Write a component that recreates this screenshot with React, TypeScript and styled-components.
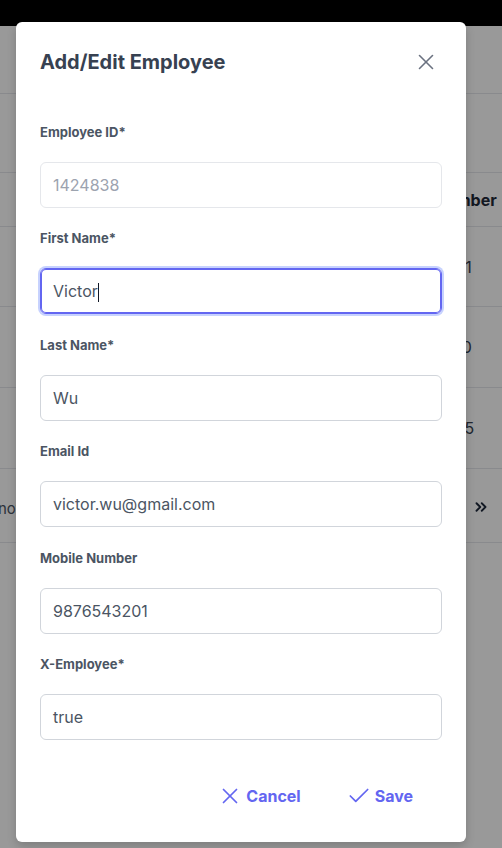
import React from "react";
import styled, { createGlobalStyle } from "styled-components";
import { X, Check, ChevronsRight } from "lucide-react";

const GlobalStyle = createGlobalStyle`
  html, body { margin: 0; padding: 0; }
  body {
    font-family: Inter, "Noto Sans", "Liberation Sans", sans-serif;
    background: #ffffff;
    overflow: hidden;
  }
  * { box-sizing: border-box; }
`;

/* ---------- background page ---------- */
const Page = styled.div`
  position: relative;
  width: 502px;
  height: 848px;
  overflow: hidden;
  background: #ffffff;
  color: #374151;
`;

const NavBar = styled.div`
  height: 26px;
  background: #000000;
`;

const Toolbar = styled.div<{ $h: number }>`
  height: ${(p) => p.$h}px;
  border-bottom: 1px solid #e5e7eb;
`;

const Row = styled.div<{ $h: number }>`
  display: grid;
  grid-template-columns: 377px 1fr;
  align-items: center;
  height: ${(p) => p.$h}px;
  border-bottom: 1px solid #e5e7eb;
  font-size: 16px;
  white-space: nowrap;
`;

const HeadCell = styled.div`
  font-weight: 700;
  color: #1f2937;
`;

const Cell = styled.div`
  color: #374151;
`;

const PagerRow = styled.div`
  display: flex;
  align-items: center;
  justify-content: space-between;
  height: 74px;
  padding-right: 12px;
  border-bottom: 1px solid #e5e7eb;
  font-size: 15px;
  color: #4b5563;
  white-space: nowrap;
`;

const PagerText = styled.span`
  display: inline-block;
  margin-top: 6px;
  text-indent: -2px;
`;

const PagerIcon = styled.span`
  display: inline-flex;
  color: #1e293b;
  margin-top: 2px;
`;

/* ---------- modal ---------- */
const Overlay = styled.div`
  position: absolute;
  inset: 0;
  background: rgba(0, 0, 0, 0.4);
  padding: 22px 0 0 16px;
`;

const Dialog = styled.div`
  width: 450px;
  background: #ffffff;
  border-radius: 6px;
  box-shadow: 0 4px 10px rgba(0, 0, 0, 0.18);
  padding: 24px 24px 26px;
`;

const Header = styled.div`
  display: flex;
  align-items: center;
  justify-content: space-between;
  height: 32px;
`;

const Title = styled.h2`
  margin: 0;
  font-size: 20px;
  font-weight: 700;
  color: #374151;
  letter-spacing: 0;
`;

const CloseButton = styled.button`
  width: 32px;
  height: 32px;
  display: flex;
  align-items: center;
  justify-content: center;
  border: 0;
  background: transparent;
  color: #6b7280;
  padding: 0;
  cursor: pointer;
`;

const Form = styled.div`
  display: flex;
  flex-direction: column;
  gap: 20.4px;
  margin-top: 44px;
`;

const Field = styled.div`
  display: flex;
  flex-direction: column;
  gap: 20px;
`;

const Label = styled.div`
  font-size: 13px;
  line-height: 20px;
  font-weight: 700;
  color: #4b5563;
`;

const ValueBox = styled.div<{ $focused?: boolean; $muted?: boolean }>`
  height: 46px;
  display: flex;
  align-items: center;
  padding: 0 12px;
  border-radius: 6px;
  border: 1px solid ${(p) => (p.$focused ? "#6366f1" : p.$muted ? "#e5e7eb" : "#d1d5db")};
  box-shadow: ${(p) => (p.$focused ? "inset 0 0 0 1px #6366f1, 0 0 0 2px #c7d2fe" : "none")};
  font-size: 16px;
  color: ${(p) => (p.$muted ? "#9ca3af" : "#4b5563")};
`;

const Caret = styled.span`
  display: inline-block;
  width: 1.5px;
  height: 19px;
  background: #111827;
  transform: translateY(1px);
`;

const Footer = styled.div`
  display: flex;
  justify-content: flex-end;
  gap: 17px;
  margin-top: 36px;
  padding-right: 15px;
`;

const ActionButton = styled.button`
  height: 40px;
  display: inline-flex;
  align-items: center;
  gap: 3px;
  padding: 0 14px;
  border: 0;
  background: transparent;
  color: #6366f1;
  font-family: inherit;
  font-size: 16px;
  font-weight: 700;
  cursor: pointer;
`;

const fields = [
  { label: "Employee ID*", value: "1424838", muted: true },
  { label: "First Name*", value: "Victor", focused: true },
  { label: "Last Name*", value: "Wu" },
  { label: "Email Id", value: "victor.wu@gmail.com" },
  { label: "Mobile Number", value: "9876543201" },
  { label: "X-Employee*", value: "true" },
];

export default function App() {
  return (
    <>
      <GlobalStyle />
      <Page>
        <NavBar />
        <Toolbar $h={68} />
        <Toolbar $h={79} />
        <Row $h={54}>
          <HeadCell />
          <HeadCell>Mobile Number</HeadCell>
        </Row>
        <Row $h={80}>
          <Cell />
          <Cell>9876543201</Cell>
        </Row>
        <Row $h={81}>
          <Cell />
          <Cell>9123456780</Cell>
        </Row>
        <Row $h={81}>
          <Cell />
          <Cell>9988776655</Cell>
        </Row>
        <PagerRow>
          <PagerText>now</PagerText>
          <PagerIcon>
            <ChevronsRight size={18} strokeWidth={2.5} />
          </PagerIcon>
        </PagerRow>

        <Overlay>
          <Dialog>
            <Header>
              <Title>Add/Edit Employee</Title>
              <CloseButton aria-label="Close">
                <X size={26} strokeWidth={1.5} />
              </CloseButton>
            </Header>
            <Form>
              {fields.map((f) => (
                <Field key={f.label}>
                  <Label>{f.label}</Label>
                  <ValueBox $focused={f.focused} $muted={f.muted}>
                    {f.value}
                    {f.focused && <Caret />}
                  </ValueBox>
                </Field>
              ))}
            </Form>
            <Footer>
              <ActionButton>
                <X size={26} strokeWidth={1.6} />
                Cancel
              </ActionButton>
              <ActionButton>
                <Check size={26} strokeWidth={1.6} />
                Save
              </ActionButton>
            </Footer>
          </Dialog>
        </Overlay>
      </Page>
    </>
  );
}
